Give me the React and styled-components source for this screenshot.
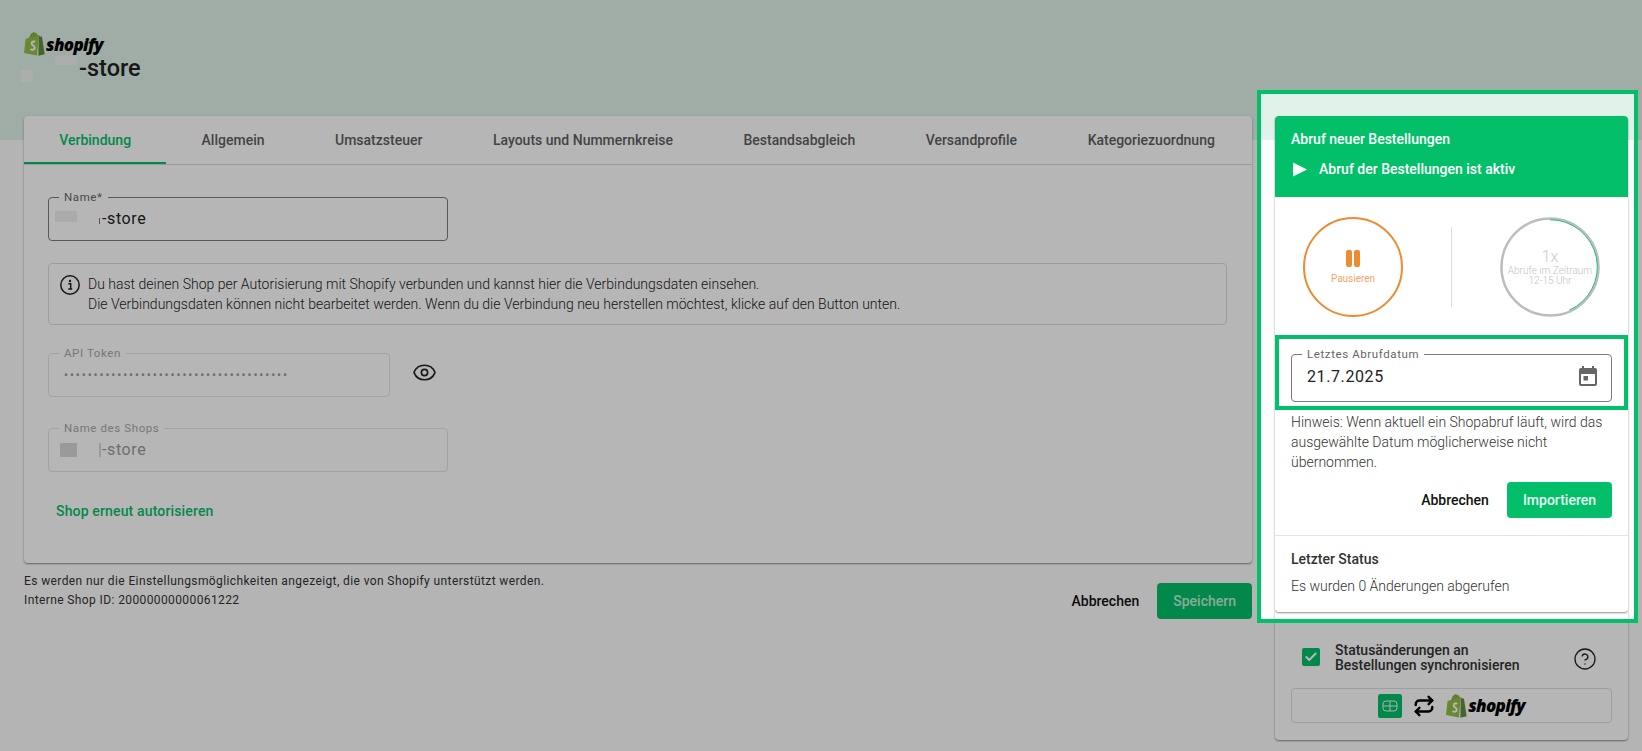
import styled, { createGlobalStyle } from "styled-components";
import { Eye, CircleHelp, Check, Repeat } from "lucide-react";

const BRAND = "#03bf6a";

const GlobalStyle = createGlobalStyle`
  html, body { margin: 0; padding: 0; }
  body { font-family: Roboto, "Liberation Sans", sans-serif; color: #222; }
`;

const Page = styled.div`
  position: relative;
  width: 1642px;
  height: 751px;
  overflow: hidden;
  box-sizing: border-box;
  padding: 32px 0 0 24px;
  display: grid;
  grid-template-columns: 1228px 353px;
  column-gap: 23px;
  align-items: start;
  background: linear-gradient(#e0f2e9 140px, #fdfdfd 140px);
`;

const LeftColumn = styled.div`
  display: flex;
  flex-direction: column;
`;

const RightColumn = styled.div`
  margin-top: 84px;
  display: flex;
  flex-direction: column;
`;

const PageHeader = styled.header`
  position: relative;
  height: 84px;
`;

const LogoRow = styled.div`
  display: flex;
  align-items: center;
  gap: 1px;
  height: 24px;
  font-size: ${(p) => p.$size || 17}px;
`;

const Wordmark = styled.span`
  font-family: "Open Sans", "Liberation Sans", sans-serif;
  font-weight: 800;
  font-style: italic;
  letter-spacing: -0.7px;
  color: #000;
`;

const PageTitle = styled.h1`
  margin: -2px 0 0 55px;
  font-size: 23.5px;
  line-height: 28px;
  font-weight: 500;
  color: #222;
`;

const Smudge = styled.span`
  position: absolute;
  left: ${(p) => p.$x}px;
  top: ${(p) => p.$y}px;
  width: ${(p) => p.$w}px;
  height: ${(p) => p.$h}px;
  background: ${(p) => p.$c || "#f0f0f0"};
`;

const Card = styled.section`
  background: #fff;
  border-radius: 4px;
  box-shadow: 0 1px 2px rgba(0, 0, 0, 0.45);
`;

const SettingsCard = styled(Card)`
  height: 447px;
`;

const Tabs = styled.nav`
  display: flex;
  height: 48px;
  border-bottom: 1px solid #d8d8d8;
`;

const Tab = styled.div`
  padding: 0 35.25px;
  display: flex;
  align-items: center;
  font-size: 14px;
  font-weight: 500;
  white-space: nowrap;
  color: ${(p) => (p.$active ? BRAND : "#5f5f5f")};
  box-shadow: ${(p) => (p.$active ? `inset 0 -2px 0 ${BRAND}` : "none")};
`;

const SettingsBody = styled.div`
  padding: 32px 24px 0;
  display: flex;
  flex-direction: column;
  align-items: flex-start;
`;

const Field = styled.div`
  position: relative;
  box-sizing: border-box;
  margin-top: ${(p) => p.$mt || 0}px;
  width: ${(p) => p.$w}px;
  height: ${(p) => p.$h || 44}px;
  border: 1px solid ${(p) => (p.$disabled ? "#e4e4e4" : "#7c7c7c")};
  border-radius: 4px;
  display: flex;
  align-items: center;
`;

const FieldLabel = styled.span`
  position: absolute;
  left: 10px;
  top: -7px;
  padding: 0 5px;
  background: #fff;
  font-size: 11.5px;
  line-height: 13px;
  letter-spacing: 0.6px;
  color: ${(p) => (p.$disabled ? "#a8a8a8" : "#666")};
`;

const FieldValue = styled.div`
  padding-left: ${(p) => p.$pl || 15}px;
  margin-top: ${(p) => p.$mt ?? -1}px;
  font-size: 16px;
  letter-spacing: ${(p) => p.$ls ?? 0.6}px;
  color: ${(p) => (p.$disabled ? "#9a9a9a" : "#222")};
`;

const TokenDots = styled(FieldValue)`
  font-size: 12px;
  letter-spacing: 1.87px;
`;

const TokenRow = styled.div`
  margin-top: 28px;
  display: flex;
  align-items: center;
  gap: 22px;
  color: #222;
`;

const EyeIcon = styled(Eye)`
  margin-top: -6px;
`;

const InfoBox = styled.div`
  box-sizing: border-box;
  margin-top: 22px;
  width: 1179px;
  height: 62px;
  padding: 10px 10px;
  display: flex;
  gap: 7px;
  border: 1px solid #dcdcdc;
  border-radius: 4px;
  font-size: 14px;
  line-height: 20px;
  font-weight: 300;
  color: #222;
`;

const TextLink = styled.a`
  margin: 31px 0 0 8px;
  font-size: 14px;
  font-weight: 500;
  letter-spacing: 0.15px;
  color: ${BRAND};
`;

const FooterRow = styled.div`
  margin-top: 9px;
  display: flex;
  justify-content: space-between;
  align-items: flex-start;
`;

const FooterNote = styled.p`
  margin: 0;
  font-size: 12px;
  line-height: 19px;
  letter-spacing: 0.39px;
  color: #333;
`;

const Actions = styled.div`
  display: flex;
  align-items: center;
  justify-content: flex-end;
  gap: 18px;
`;

const TextButton = styled.span`
  font-size: 14px;
  font-weight: 500;
  color: #111;
`;

const Button = styled.span`
  box-sizing: border-box;
  height: 36px;
  display: flex;
  align-items: center;
  padding: 0 16px;
  border-radius: 4px;
  font-size: 14px;
  font-weight: 500;
  background: ${BRAND};
  color: ${(p) => (p.$dim ? "#c0f0d8" : "#e6fbf0")};
`;

const SaveActions = styled(Actions)`
  margin-top: 11px;
`;

const ImportCard = styled(Card)`
  position: relative;
  z-index: 1;
  height: 496px;
  display: flex;
  flex-direction: column;
`;

const ImportHead = styled.div`
  height: 81px;
  box-sizing: border-box;
  padding: 14px 16px 0;
  background: ${BRAND};
  border-radius: 4px 4px 0 0;
  color: #fff;
  font-size: 14px;
  font-weight: 500;
`;

const HeadTitle = styled.div`
  line-height: 18px;
`;

const HeadStatus = styled.div`
  margin-top: 12px;
  display: flex;
  align-items: center;
  gap: 12px;
  line-height: 18px;
  padding-left: 2px;
`;

const Gauges = styled.div`
  height: 120px;
  box-sizing: border-box;
  padding: 20px 28px 0;
  display: grid;
  grid-template-columns: 100px 1fr 100px;
  align-items: start;
`;

const Gauge = styled.div`
  position: relative;
  box-sizing: border-box;
  width: 100px;
  height: 100px;
  border-radius: 50%;
  border: ${(p) => (p.$orange ? "2.5px solid #ee8a30" : "none")};
  display: flex;
  flex-direction: column;
  align-items: center;
  justify-content: flex-start;
  text-align: center;
`;

const PauseIcon = styled.svg`
  margin-top: 31px;
  width: 16px;
  height: 17px;
`;

const PauseLabel = styled.div`
  margin-top: 6px;
  font-size: 10px;
  line-height: 12px;
  color: #f5a368;
`;

const GaugeRing = styled.svg`
  position: absolute;
  inset: 0;
  width: 100px;
  height: 100px;
`;

const GaugeCount = styled.div`
  margin-top: 31px;
  font-size: 16px;
  line-height: 18px;
  font-weight: 300;
  color: #cacaca;
`;

const GaugeText = styled.div`
  font-size: 10px;
  line-height: 10px;
  font-weight: 300;
  color: #c4c4c4;
  white-space: nowrap;
`;

const GaugeDivider = styled.div`
  justify-self: center;
  margin-top: 10px;
  width: 1px;
  height: 80px;
  background: #dedede;
`;

const DateSection = styled.div`
  padding: 37px 16px 0;
`;

const CalendarIcon = styled.svg`
  position: absolute;
  right: 11px;
  top: 10px;
  width: 24px;
  height: 24px;
  fill: #666;
`;

const Hint = styled.p`
  margin: 10px 16px 0;
  font-size: 14px;
  line-height: 20px;
  font-weight: 300;
  color: #333;
`;

const ImportActions = styled(Actions)`
  margin: 10px 16px 0;
`;

const StatusBlock = styled.div`
  margin-top: 17px;
  padding: 15px 16px 0;
  border-top: 1px solid #e4e4e4;
`;

const StatusTitle = styled.div`
  font-size: 14px;
  line-height: 16px;
  font-weight: 500;
  color: #333;
`;

const StatusText = styled.div`
  margin-top: 11px;
  font-size: 14px;
  line-height: 16px;
  font-weight: 300;
  color: #333;
`;

const SyncCard = styled(Card)`
  height: 129px;
  margin-top: -1px;
  padding: 0 16px;
  display: flex;
  flex-direction: column;
  border-radius: 0 0 4px 4px;
`;

const SyncRow = styled.div`
  height: 77px;
  box-sizing: border-box;
  padding: 23px 15px 0 11px;
  display: flex;
  align-items: flex-start;
  color: #222;
`;

const CheckBox = styled.span`
  margin-top: 14px;
  width: 18px;
  height: 18px;
  flex: none;
  border-radius: 2px;
  background: ${BRAND};
  color: #fff;
  display: flex;
  align-items: center;
  justify-content: center;
`;

const SyncLabel = styled.div`
  flex: 1;
  margin: 9px 0 0 15px;
  font-size: 14px;
  line-height: 15px;
  font-weight: 500;
  color: #333;
`;

const HelpIcon = styled(CircleHelp)`
  margin: 13px 0 0;
`;

const BrandBox = styled.div`
  height: 35px;
  box-sizing: border-box;
  border: 1px solid #dedede;
  border-radius: 4px;
  display: flex;
  align-items: center;
  justify-content: center;
  gap: 11px;
  color: #000;
`;

const Spotlight = styled.div`
  position: absolute;
  z-index: 2;
  left: 1257px;
  top: 90px;
  width: 381px;
  height: 533px;
  box-sizing: border-box;
  border: 4.5px solid ${BRAND};
  box-shadow: 0 0 0 2000px rgba(0, 0, 0, 0.286);
  pointer-events: none;
`;

const SpotlightInner = styled.div`
  position: absolute;
  z-index: 2;
  left: 1275px;
  top: 335px;
  width: 353px;
  height: 75px;
  box-sizing: border-box;
  border: 4.5px solid ${BRAND};
  pointer-events: none;
`;

const ShopifyBag = ({ size = 24 }) => (
  <svg width={size * 0.88} height={size} viewBox="0 0 22 25">
    <path d="M15.4 3.2 14.4 3.5C14 2 13.2 1 12 1c-.6-.8-1.4-1-2-.8C7.400.7 6 3.600 5.500 6L2.500 6.900C1.700 7.200 1.600 7.300 1.500 8L0 22l13.500 2.600L15.400 3.200z" fill="#95bf47" />
    <path d="M15.400 3.200 15 24.700 21.500 23.300 18.800 5.100c-.1-.3-.3-.4-.5-.4l-1.800-.1-1.100-1.400z" fill="#5e8e3e" />
    <path d="M11.800 10.200c-.8-.5-3.600-.7-3.800 1.500-.2 2.500 3.500 2.400 3.200 5-.2 1.900-2.600 2.200-4.400 1" fill="none" stroke="#fff" strokeWidth="2" />
    <path d="M6.600 6.200C7.200 3.800 8.500 1.200 10.400 1.100M9.500 5.300C9.900 3.600 10.600 2 11.800 1.500M12.500 4.600C12.400 3.300 12.600 2.200 12.300 1.400" fill="none" stroke="#6f9a35" strokeWidth=".8" />
  </svg>
);

const BrandMark = () => (
  <svg width="24" height="24" viewBox="0 0 24 24">
    <rect width="24" height="24" rx="2.500" fill={BRAND} />
    <path d="M8 7h8a3 3 0 0 1 3 3v4a3 3 0 0 1-3 3H8a3 3 0 0 1-3-3v-4a3 3 0 0 1 3-3zM5 12h14M12 7v10" fill="none" stroke="#e8fff2" strokeWidth="1" />
  </svg>
);

const InfoIcon = () => (
  <svg width="22" height="22" viewBox="0 0 22 22" style={{ flex: "none" }}>
    <circle cx="11" cy="11" r="9.200" fill="none" stroke="#222" strokeWidth="1.500" />
    <circle cx="11" cy="7" r="1.200" fill="#222" />
    <path d="M9.300 9.800H11.700V14.800M9.300 15H13.200" fill="none" stroke="#222" strokeWidth="1.500" />
  </svg>
);

const TABS = ["Verbindung", "Allgemein", "Umsatzsteuer", "Layouts und Nummernkreise", "Bestandsabgleich", "Versandprofile", "Kategoriezuordnung"];

export default function App() {
  return (
    <Page>
      <GlobalStyle />
      <LeftColumn>
        <PageHeader>
          <LogoRow>
            <ShopifyBag size={24} />
            <Wordmark>shopify</Wordmark>
          </LogoRow>
          <PageTitle>-store</PageTitle>
          <Smudge $x={31} $y={24} $w={22} $h={9} $c="#f2f4f3" />
          <Smudge $x={-3} $y={38} $w={12} $h={12} $c="#f2f4f3" />
        </PageHeader>

        <SettingsCard>
          <Tabs>
            {TABS.map((t, i) => (
              <Tab key={t} $active={i === 0}>{t}</Tab>
            ))}
          </Tabs>
          <SettingsBody>
            <Field $w={400}>
              <FieldLabel>Name*</FieldLabel>
              <FieldValue $pl={53}>-store</FieldValue>
              <Smudge $x={6} $y={13} $w={22} $h={11} />
              <Smudge $x={50} $y={20} $w={1} $h={6} $c="#777" />
            </Field>

            <InfoBox>
              <InfoIcon />
              <div>
                Du hast deinen Shop per Autorisierung mit Shopify verbunden und kannst hier die Verbindungsdaten einsehen.<br />
                Die Verbindungsdaten können nicht bearbeitet werden. Wenn du die Verbindung neu herstellen möchtest, klicke auf den Button unten.
              </div>
            </InfoBox>

            <TokenRow>
              <Field $w={342} $disabled>
                <FieldLabel $disabled>API Token</FieldLabel>
                <TokenDots $disabled>••••••••••••••••••••••••••••••••••••••</TokenDots>
              </Field>
              <EyeIcon size={25} strokeWidth={1.6} />
            </TokenRow>

            <Field $w={400} $mt={31} $disabled>
              <FieldLabel $disabled>Name des Shops</FieldLabel>
              <FieldValue $pl={53} $disabled>-store</FieldValue>
              <Smudge $x={11} $y={14} $w={17} $h={14} $c="#d8d8d8" />
              <Smudge $x={50} $y={14} $w={2} $h={14} $c="#d8d8d8" />
            </Field>

            <TextLink>Shop erneut autorisieren</TextLink>
          </SettingsBody>
        </SettingsCard>

        <FooterRow>
          <FooterNote>
            Es werden nur die Einstellungsmöglichkeiten angezeigt, die von Shopify unterstützt werden.<br />
            Interne Shop ID: 20000000000061222
          </FooterNote>
          <SaveActions>
            <TextButton>Abbrechen</TextButton>
            <Button $dim>Speichern</Button>
          </SaveActions>
        </FooterRow>
      </LeftColumn>

      <RightColumn>
        <ImportCard>
          <ImportHead>
            <HeadTitle>Abruf neuer Bestellungen</HeadTitle>
            <HeadStatus>
              <svg width="14" height="15" viewBox="0 0 14 15"><path d="M0 0.500 14 7.500 0 14.500z" fill="#fff" /></svg>
              Abruf der Bestellungen ist aktiv
            </HeadStatus>
          </ImportHead>

          <Gauges>
            <Gauge $orange>
              <PauseIcon viewBox="0 0 16 17">
                <rect x="1" width="6" height="17" rx="2" fill="#ee8a30" />
                <rect x="9" width="6" height="17" rx="2" fill="#ee8a30" />
              </PauseIcon>
              <PauseLabel>Pausieren</PauseLabel>
            </Gauge>
            <GaugeDivider />
            <Gauge>
              <GaugeRing viewBox="0 0 100 100">
                <circle cx="50" cy="50" r="48.500" fill="none" stroke="#bdbdbd" strokeWidth="2.500" />
                <path d="M50 2.700A47.300 47.300 0 0 1 69.300 93.200" fill="none" stroke="#1fbf78" strokeWidth="1" />
              </GaugeRing>
              <GaugeCount>1x</GaugeCount>
              <GaugeText>Abrufe im Zeitraum</GaugeText>
              <GaugeText>12-15 Uhr</GaugeText>
            </Gauge>
          </Gauges>

          <DateSection>
            <Field $w={321} $h={48}>
              <FieldLabel>Letztes Abrufdatum</FieldLabel>
              <FieldValue $mt={-4} $ls={0.6}>21.7.2025</FieldValue>
              <CalendarIcon viewBox="0 0 24 24">
                <path d="M12 11H7.500v4.500H12V11zM16 1v2H8V1H6v2H5c-1.110 0-2 .9-2 2v14c0 1.100.89 2 2 2h14c1.100 0 2-.9 2-2V5c0-1.100-.9-2-2-2h-1V1h-2zm3 18H5V9h14v10z" />
              </CalendarIcon>
            </Field>
          </DateSection>

          <Hint>Hinweis: Wenn aktuell ein Shopabruf läuft, wird das ausgewählte Datum möglicherweise nicht übernommen.</Hint>

          <ImportActions>
            <TextButton>Abbrechen</TextButton>
            <Button>Importieren</Button>
          </ImportActions>

          <StatusBlock>
            <StatusTitle>Letzter Status</StatusTitle>
            <StatusText>Es wurden 0 Änderungen abgerufen</StatusText>
          </StatusBlock>
        </ImportCard>

        <SyncCard>
          <SyncRow>
            <CheckBox><Check size={14} strokeWidth={3.5} /></CheckBox>
            <SyncLabel>Statusänderungen an<br />Bestellungen synchronisieren</SyncLabel>
            <HelpIcon size={24} strokeWidth={1.3} />
          </SyncRow>
          <BrandBox>
            <BrandMark />
            <Repeat size={22} strokeWidth={2.6} />
            <LogoRow $size={17}>
              <ShopifyBag size={24} />
              <Wordmark>shopify</Wordmark>
            </LogoRow>
          </BrandBox>
        </SyncCard>
      </RightColumn>

      <Spotlight />
      <SpotlightInner />
    </Page>
  );
}
